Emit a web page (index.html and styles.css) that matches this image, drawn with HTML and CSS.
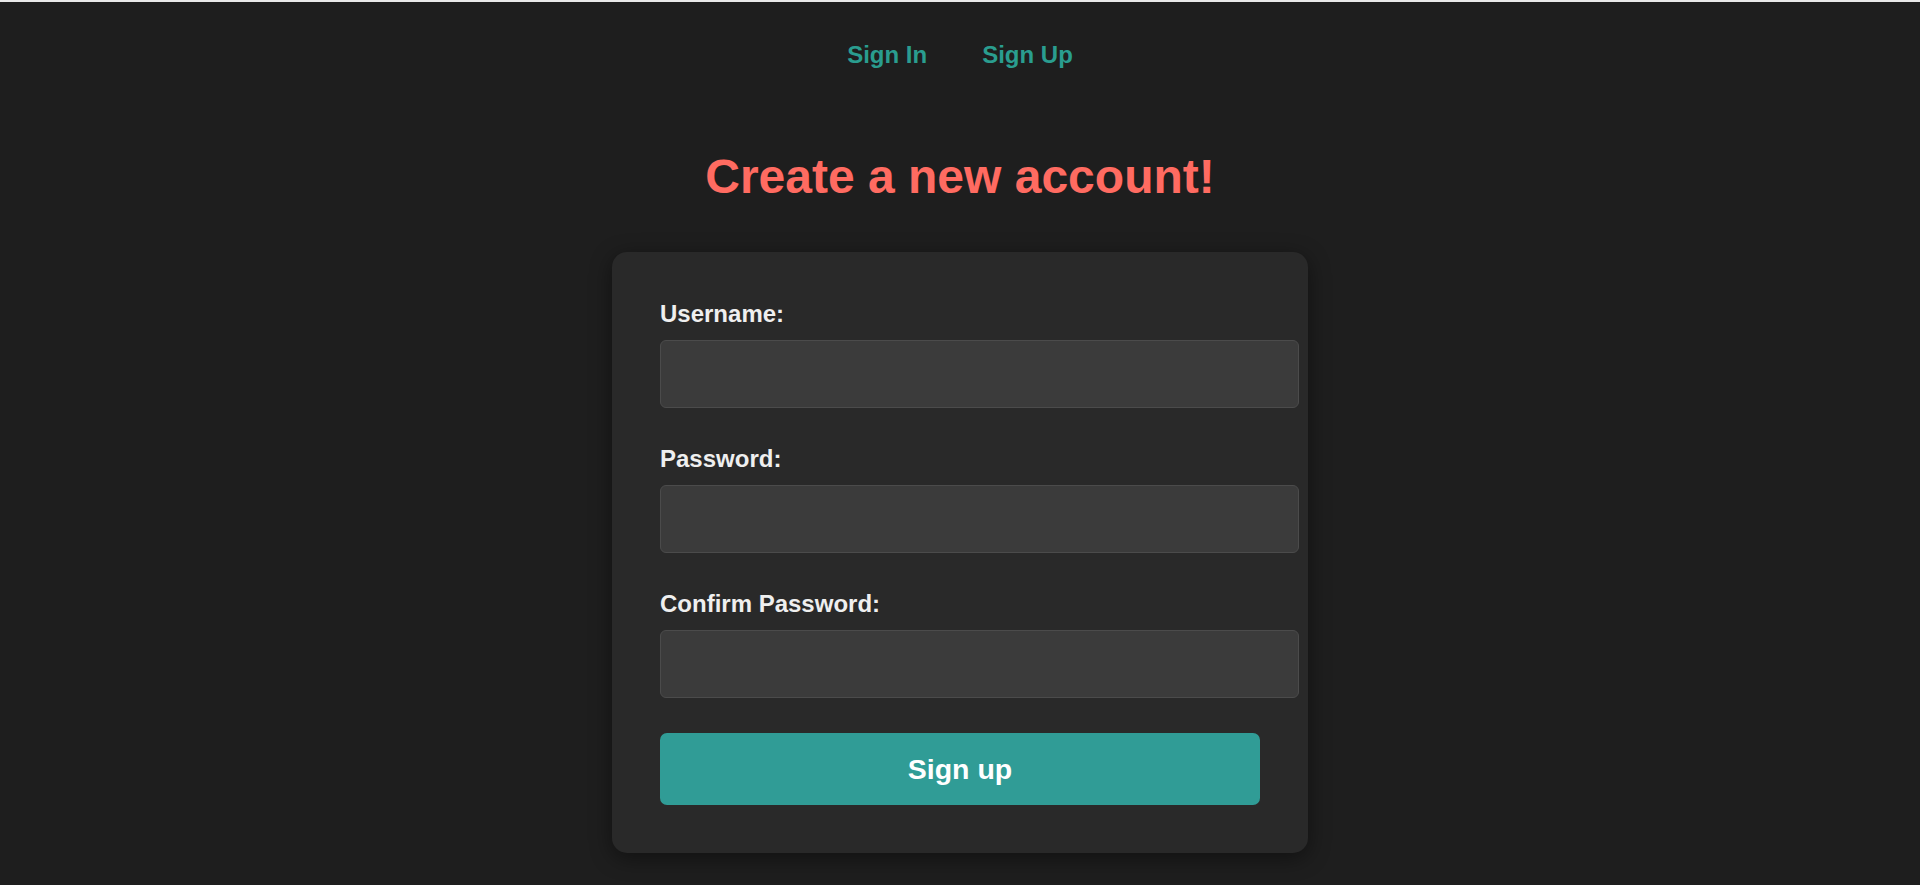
FILE: index.html
```html
<!DOCTYPE html>
<html lang="en">
<head>
<meta charset="utf-8">
<title>Sign Up</title>
<link rel="stylesheet" href="styles.css">
</head>
<body>
<div class="topbar"></div>
<nav class="nav">
  <a class="nav-link" href="#">Sign In</a>
  <a class="nav-link" href="#">Sign Up</a>
</nav>
<main class="main">
  <h1 class="title">Create a new account!</h1>
  <form class="card">
    <div class="field">
      <label class="label" for="username">Username:</label>
      <input class="input" id="username" type="text">
    </div>
    <div class="field">
      <label class="label" for="password">Password:</label>
      <input class="input" id="password" type="password">
    </div>
    <div class="field">
      <label class="label" for="confirm">Confirm Password:</label>
      <input class="input" id="confirm" type="password">
    </div>
    <button class="btn" type="button">Sign up</button>
  </form>
</main>
</body>
</html>
```
FILE: styles.css
```css
html, body {
  margin: 0;
  padding: 0;
}
body {
  background: #1e1e1e;
  font-family: "Liberation Sans", Arial, sans-serif;
  min-height: 885px;
  overflow: hidden;
}
.topbar {
  height: 2px;
  background: #e9e9e9;
}
.nav {
  display: flex;
  justify-content: center;
  gap: 55px;
  padding-top: 39px;
}
.nav-link {
  color: #2a9d8f;
  font-weight: bold;
  font-size: 24px;
  line-height: 28px;
  text-decoration: none;
}
.main {
  display: flex;
  flex-direction: column;
  align-items: center;
}
.title {
  margin: 80px 0 47px;
  color: #ff6b61;
  font-size: 48px;
  line-height: 56px;
  font-weight: bold;
}
.card {
  width: 600px;
  padding: 48px;
  background: #292929;
  border-radius: 15px;
  box-shadow: 0 5px 22px rgba(0, 0, 0, 0.45);
}
.field {
  margin-bottom: 37px;
}
.field:nth-child(3) {
  margin-bottom: 35px;
}
.label {
  display: block;
  color: #efefef;
  font-size: 24px;
  line-height: 28px;
  font-weight: bold;
  margin-bottom: 12px;
}
.input {
  display: block;
  box-sizing: content-box;
  width: 100%;
  height: 66px;
  padding: 0 18.5px;
  margin: 0;
  border: 1px solid #4b4b4b;
  border-radius: 6px;
  background: #3b3b3b;
  color: #eeeeee;
  font-size: 20px;
  font-family: "Liberation Sans", Arial, sans-serif;
  outline: none;
}
.btn {
  display: block;
  width: 100%;
  height: 72px;
  border: none;
  border-radius: 7px;
  background: #309c96;
  color: #ffffff;
  font-family: "Liberation Sans", Arial, sans-serif;
  font-weight: bold;
  font-size: 28.5px;
  cursor: pointer;
}
```
